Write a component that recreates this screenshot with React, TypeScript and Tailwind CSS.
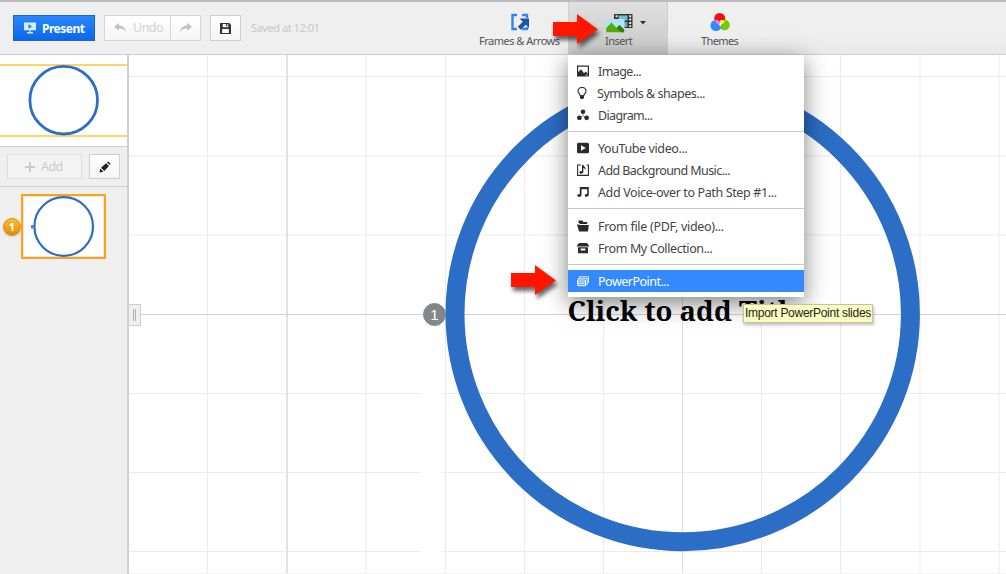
import type { ReactNode } from "react";

const BLUE = "#2c6dc5";

function Icon({ children, className = "" }: { children: ReactNode; className?: string }) {
  return (
    <svg viewBox="0 0 12 12" className={`h-3 w-3 shrink-0 ${className}`} fill="currentColor">
      {children}
    </svg>
  );
}

const icons = {
  image: (
    <Icon>
      <path fillRule="evenodd" d="M0 .5h12v11H0zM1.2 1.700v5.500L4 4.200l3 4 1.800-1.700 2 2.200V1.700z" />
      <path d="M9.600 9.200l1.200 1.200H8.200z" fill="#fff" />
    </Icon>
  ),
  bulb: (
    <Icon className="-ml-px">
      <path d="M4.200 8.700C4.200 6.900 2 6.300 2 4a4 3.500 0 018 0c0 2.300-2.200 2.900-2.200 4.700z" fill="none" stroke="currentColor" strokeWidth="1.100" />
      <path d="M4 8.500h4V11l-1 1H5l-1-1z" />
    </Icon>
  ),
  diagram: (
    <Icon>
      <circle cx="6" cy="2.800" r="2.300" />
      <circle cx="2.400" cy="8.800" r="2.400" />
      <circle cx="9.600" cy="8.800" r="2.400" />
      <path d="M6 4v3M4 8l2-1.300L8 8" fill="none" stroke="currentColor" strokeWidth=".8" opacity=".5" />
    </Icon>
  ),
  video: (
    <Icon>
      <path fillRule="evenodd" d="M1.500 .8h9Q12 .8 12 2.300v7.400q0 1.500-1.500 1.500h-9Q0 11.200 0 9.700V2.300Q0 .8 1.500 .8zM4 3.300v5.400L8.800 6z" />
    </Icon>
  ),
  music: (
    <Icon>
      <path d="M4 1H.6v10.400h10.800V1H9.700" fill="none" stroke="currentColor" strokeWidth="1.100" />
      <path d="M5 1l1.200-.2C6.500 2.500 9.400 3 8.500 6.200 8.200 4.500 7 4.200 6.300 4.100v4.200C6 10 2.400 10.400 2.500 8.500 2.600 7.300 4 6.900 5 7.200z" />
    </Icon>
  ),
  note: (
    <Icon>
      <path d="M2.800 1h9v7.700c0 2.400-4 2.600-4 .7 0-1.200 1.400-1.600 2.400-1.300V3.200H4.500v5.900c0 2.400-4.300 2.400-4.300.5 0-1.300 1.500-1.600 2.600-1.400z" />
    </Icon>
  ),
  folder: (
    <Icon>
      <path d="M1.500 .6h4l.8 1.400H10.200v2H2.500V3h-1zM0 4.500h2l.5.500h9.300L11 11.500H2z" />
    </Icon>
  ),
  box: (
    <Icon>
      <path d="M2 1h8l2 2.500v1H0v-1z" />
      <path fillRule="evenodd" d="M1 5.200h10v6H1zM3.700 6.500v2h4.600v-2z" />
    </Icon>
  ),
  slides: (
    <Icon>
      <g fill="none" stroke="currentColor">
        <path d="M2.500 3V1.700h9v6h-1" strokeWidth=".8" />
        <path d="M1.500 4.500V3.300h8.800v6.200H9" strokeWidth=".8" />
        <path d="M.6 5h8v5.700h-8zM.6 7h8M.6 8.800h8" />
      </g>
    </Icon>
  ),
};

type Item = { icon: ReactNode; label: string; cls: string; active?: boolean };

function MenuItem({ icon, label, cls, active }: Item) {
  return (
    <div className={`flex h-[22px] items-center pl-[9px] ${active ? "bg-[#338aff] text-white" : "text-[#2b2b2b]"}`}>
      {icon}
      <span className={`ml-[9px] whitespace-nowrap pt-[2px] text-[12.5px] ${active ? "text-white" : "text-[#444]"} ${cls}`}>{label}</span>
    </div>
  );
}

function InsertMenu() {
  return (
    <div className="absolute left-[568px] top-[55px] z-20 h-[242px] w-[236px] bg-white pt-[5px] shadow-[0_6px_22px_rgba(0,0,0,0.5)]">
      <MenuItem icon={icons.image} label="Image..." cls="tracking-[-0.6px]" />
      <MenuItem icon={icons.bulb} label="Symbols & shapes..." cls="-ml-[1px] tracking-[-0.45px]" />
      <MenuItem icon={icons.diagram} label="Diagram..." cls="tracking-[-0.65px]" />
      <div className="my-[5px] h-px bg-[#c8c8c8]" />
      <MenuItem icon={icons.video} label="YouTube video..." cls="tracking-[-0.4px]" />
      <MenuItem icon={icons.music} label="Add Background Music..." cls="tracking-[-0.58px]" />
      <MenuItem icon={icons.note} label="Add Voice-over to Path Step #1..." cls="tracking-[-0.37px]" />
      <div className="mb-[6px] mt-[5px] h-px bg-[#c8c8c8]" />
      <MenuItem icon={icons.folder} label="From file (PDF, video)..." cls="tracking-[-0.3px]" />
      <MenuItem icon={icons.box} label="From My Collection..." cls="tracking-[-0.4px]" />
      <div className="my-[5px] h-px bg-[#c8c8c8]" />
      <MenuItem icon={icons.slides} label="PowerPoint..." cls="tracking-[-0.5px]" active />
    </div>
  );
}

function RedArrow({ className }: { className: string }) {
  return (
    <svg viewBox="0 0 54 42" className={`absolute z-30 h-[42px] w-[54px] ${className}`}>
      <path d="M2 10h24V2l21 15.500L26 32v-8H2z" fill="#ff1500" className="drop-shadow-[2px_4px_2px_rgba(0,0,0,0.6)]" />
    </svg>
  );
}

function Toolbar() {
  return (
    <header className="flex h-[55px] shrink-0 border-b border-t-2 border-b-[#cfcfcf] border-t-[#bcbcbc] bg-[#efefef]">
      <div className="flex w-[478px] items-start pl-[13px] pt-[13px]">
        <div className="flex h-[26px] w-[82px] items-center border border-[#2163bd] bg-gradient-to-b from-[#2987fb] to-[#0868ec] pl-[10px] text-white">
          <svg viewBox="0 0 12 12" className="h-3 w-3" fill="currentColor">
            <path fillRule="evenodd" d="M0 .5h12v7.700H0zM4.500 2v4.800L8 4.400z" opacity=".85" />
            <path d="M5.400 8h1.200v2H9v1.500H3V10h2.400z" opacity=".85" />
          </svg>
          <span className="ml-[6px] pt-px text-[12px] font-bold tracking-[-0.5px]">Present</span>
        </div>
        <div className="ml-[9px] flex h-[26px] w-[97px] border border-[#d6d6d6] bg-gradient-to-b from-white to-[#f5f5f5]">
          <div className="flex w-[66px] items-center border-r border-[#d6d6d6] pl-[9px]">
            <svg viewBox="0 0 12 10" className="h-[10px] w-3" fill="#c0c0c0">
              <path d="M0 3.800L5 0v2.500c4 .2 6.500 3 7 7C10.300 6.500 8 5.300 5 5.300v2.500z" />
            </svg>
            <span className="ml-[7px] pt-px text-[12.5px] tracking-[-0.5px] text-[#d2d2d2]">Undo</span>
          </div>
          <div className="flex flex-1 items-center justify-center">
            <svg viewBox="0 0 12 10" className="h-[10px] w-3" fill="#c0c0c0">
              <path d="M12 3.800L7 0v2.500C3 2.700.5 5.500 0 9.500c1.700-3 4-4.200 7-4.200v2.500z" />
            </svg>
          </div>
        </div>
        <div className="ml-[9px] flex h-[26px] w-[31px] items-center justify-center border border-[#cecece] bg-gradient-to-b from-white to-[#f5f5f5]">
          <svg viewBox="0 0 12 12" className="h-[11px] w-[11px]" fill="#333">
            <path fillRule="evenodd" d="M0 0h10l2 2v10H0zM3 1.200v3.300h6V1.200zM2.300 6.500v4.300h7.400V6.500z" />
            <path d="M6.500 1.200H8v2.300H6.500z" />
          </svg>
        </div>
        <span className="ml-[10px] mt-[5px] text-[11px] leading-[16px] tracking-[-0.45px] text-[#c8c8c8]">Saved at 12:01</span>
      </div>
      <div className="flex w-[90px] flex-col items-start">
        <svg viewBox="0 0 20 20" className="ml-[32px] mt-[10px] h-5 w-5">
          <path d="M7 3H2.500v14H7M12 3h5v3M17 15v2h-5" fill="none" stroke="#2e86f5" strokeWidth="2.400" />
          <path d="M9.500 6.500h9.500V16l-3.200-3.200-5 5-3-3 5-5z" fill="#1c55a8" />
        </svg>
        <span className="ml-px mt-[1px] whitespace-nowrap text-[11px] leading-[16px] tracking-[-0.5px] text-[#555]">Frames &amp; Arrows</span>
      </div>
      <div className="flex w-[100px] flex-col items-start border-x border-[#cfcfcf] bg-gradient-to-b from-[#e0e0e0] to-[#cacaca]">
        <div className="ml-[37px] mt-[12px] flex h-[19px] items-start">
          <svg viewBox="0 0 27 19" className="h-[19px] w-[27px]">
            <rect x="8" y="0" width="18.500" height="14" fill="#333" />
            <rect x="12.500" y="1.500" width="9" height="5" fill="#6fc0d2" />
            <rect x="12.500" y="8" width="9" height="5" fill="#5da8bb" />
            <path d="M9.500 1.300h2v2h-2zM9.500 5h2v2h-2zM23.200 1.300h2v2h-2zM23.200 4.600h2v2h-2zM23.200 7.900h2v2h-2zM23.200 11.200h2v1.800h-2z" fill="#eee" />
            <rect x="0" y="5" width="18.500" height="13.500" fill="#d8d8d8" />
            <rect x=".3" y="5.300" width="17.800" height="12.900" fill="#aee4fb" />
            <path d="M.3 14L5.500 8.500l5 5.500 3-3 4.600 4.500v2.700H.3z" fill="#58a70b" />
            <path d="M10.500 14l3-3 4.600 4.500v2.700h-3z" fill="#397f07" />
          </svg>
          <svg viewBox="0 0 6 4" className="ml-[7px] mt-[7px] h-[4px] w-[6px]"><path d="M0 0h6L3 3.500z" fill="#333" /></svg>
        </div>
        <span className="ml-[36px] text-[11px] leading-[16px] tracking-[-0.55px] text-[#555]">Insert</span>
      </div>
      <div className="flex flex-1 flex-col items-start bg-gradient-to-b from-[#efefef] from-60% to-[#e9e9e9]">
        <svg viewBox="0 0 20 20" className="ml-[42px] mt-[10px] h-5 w-5">
          <circle cx="9.700" cy="6.500" r="5.500" fill="#f20d13" />
          <circle cx="14.500" cy="13" r="5.300" fill="#73c80d" />
          <circle cx="6" cy="13.500" r="5.500" fill="#338aff" />
          <path d="M10 8.200q3-.5 5 1-1 2.500-3.500 3.300-1.500-1.500-1.500-4.300z" fill="#ff0" />
          <path d="M5 8q3-.4 5.500 1.700L9.500 13Q5.500 12 5 8z" fill="#e77df0" />
          <path d="M10.500 9.700q1.200 2.300.5 4.800l-2-1.500z" fill="#fff" />
        </svg>
        <span className="ml-[33px] mt-[1px] text-[11px] leading-[16px] tracking-[-0.6px] text-[#555]">Themes</span>
      </div>
    </header>
  );
}

function Sidebar() {
  return (
    <aside className="relative flex w-[129px] shrink-0 flex-col border-r-2 border-[#cfcfcf] bg-[#efefef]">
      <div className="h-[92px] border-b border-[#cfcfcf] bg-white">
        <svg viewBox="0 55 127 91" className="h-[91px] w-[127px]">
          <path d="M0 65h127M0 136h127" stroke="#ffd464" strokeWidth="2" />
          <circle cx="63.700" cy="100.200" r="33.800" fill="#fff" stroke={BLUE} strokeWidth="2.800" />
        </svg>
      </div>
      <div className="flex h-[40px] border-b border-[#cfcfcf] pl-[7px] pt-[7px]">
        <div className="flex h-[25px] w-[75px] items-center border border-[#dedede] bg-[#f3f3f3] pl-[17px] text-[#cbcbcb]">
          <svg viewBox="0 0 10 10" className="h-[10px] w-[10px]"><path d="M5 0v10M0 5h10" stroke="currentColor" strokeWidth="2" /></svg>
          <span className="ml-[6px] pt-[2px] text-[12.5px] tracking-[-0.6px]">Add</span>
        </div>
        <div className="ml-[7px] flex h-[25px] w-[31px] items-center justify-center border border-[#cfcfcf] bg-gradient-to-b from-white to-[#f5f5f5]">
          <svg viewBox="0 0 12 12" className="h-3 w-3" fill="#222">
            <path d="M.5 11.500l.7-4 3.300 3.300zM2 6.700l5-4.500L10 5 5.300 9.900zM8 1.600L9.300.5l2.200 2.200L10.600 4z" />
          </svg>
        </div>
      </div>
      <div className="flex items-center pl-[3px] pt-[7px]">
        <div className="flex h-[18px] w-[18px] items-center justify-center rounded-full border border-[#d88d08] bg-gradient-to-b from-[#f9bd35] to-[#e28b00] text-[11px] font-bold text-white shadow-sm">1</div>
        <svg viewBox="21 194 86 66" className="h-[66px] w-[86px]">
          <rect x="22" y="195" width="83" height="63" fill="#fff" stroke="#ffa20f" strokeWidth="2" />
          <rect x="23.500" y="196.500" width="80" height="60" fill="none" stroke="#dfe4f0" />
          <circle cx="63.700" cy="226.500" r="29.300" fill="none" stroke={BLUE} strokeWidth="2.200" />
          <rect x="31" y="225" width="3" height="3.500" fill="#688998" />
        </svg>
      </div>
    </aside>
  );
}

const columns = [207.5, 366, 445.5, 524.5, 603.5, 761.5, 840.5, 920, 999];
const upperRows = [76.5, 156, 235];
const lowerRows = [393.5, 472.5, 551.5];

function Canvas() {
  return (
    <main className="relative min-w-0 flex-1 bg-white">
      <svg viewBox="129 55 877 519" className="block h-[519px] w-[877px]">
        <g stroke="#ebebeb">
          {columns.map((x) => <path key={x} d={`M${x} 55v519`} />)}
          {upperRows.map((y) => <path key={y} d={`M129 ${y}h877`} />)}
          {lowerRows.map((y) => <path key={y} d={`M129 ${y}h292M442 ${y}h564`} />)}
        </g>
        <path d="M287 55v519" stroke="#e2e2e2" strokeWidth="2" />
        <path d="M682.500 55v519" stroke="#dedede" />
        <path d="M129 314.500h877" stroke="#d2d2d2" />
        <path d="M129 573.500h877" stroke="#f3f3f3" />
        <circle cx="682.700" cy="314" r="227.700" fill="none" stroke={BLUE} strokeWidth="19" />
      </svg>
      <div className="absolute left-0 top-[249px] flex h-[22px] w-[12px] items-center justify-center gap-px border border-l-0 border-[#cfcfcf] bg-[#efefef]">
        <i className="h-[12px] w-px bg-[#b0b0b0]" />
        <i className="h-[12px] w-px bg-[#b0b0b0]" />
      </div>
      <div className="absolute left-[294px] top-[248px] flex h-[23px] w-[23px] items-center justify-center rounded-full border border-[#6793ae] bg-[#868686] font-['Liberation_Sans'] text-[15px] leading-none text-white">1</div>
      <div className="absolute left-[438.500px] top-[239px] whitespace-nowrap font-['Noto_Serif','DejaVu_Serif_Condensed','DejaVu_Serif',serif] text-[27.5px] font-bold leading-[34px] text-black">Click to add Title</div>
    </main>
  );
}

export default function App() {
  return (
    <div className="relative flex h-[574px] w-[1006px] flex-col overflow-hidden bg-white font-['Noto_Sans','Open_Sans',sans-serif]">
      <Toolbar />
      <div className="flex min-h-0 flex-1">
        <Sidebar />
        <Canvas />
      </div>
      <InsertMenu />
      <RedArrow className="left-[551px] top-[12px]" />
      <RedArrow className="left-[509px] top-[263px]" />
      <div className="absolute left-[743px] top-[304px] z-30 flex h-[19px] w-[130px] items-center whitespace-nowrap border border-[#c3c4a5] bg-[#fafdbd] pb-px pl-px font-['Liberation_Sans',Arial,sans-serif] text-[12px] tracking-[-0.28px] text-[#222] shadow-[1px_2px_3px_rgba(0,0,0,0.25)]">Import PowerPoint slides</div>
    </div>
  );
}
